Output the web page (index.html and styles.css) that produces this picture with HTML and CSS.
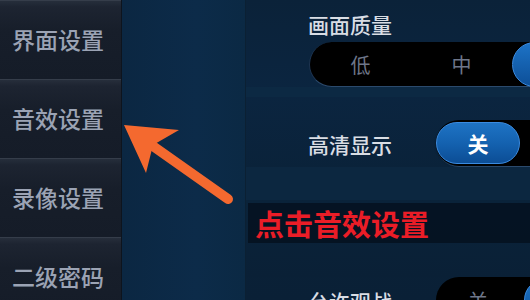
FILE: index.html
```html
<!DOCTYPE html>
<html lang="zh">
<head>
<meta charset="utf-8">
<link rel="stylesheet" href="styles.css">
</head>
<body>
<div class="screen">
  <nav class="sidebar">
    <div class="nav-item">界面设置</div>
    <div class="nav-item">音效设置</div>
    <div class="nav-item">录像设置</div>
    <div class="nav-item">二级密码</div>
  </nav>
  <div class="main">
    <div class="strip"></div>
    <div class="panel">
      <div class="row-quality">
        <div class="label">画面质量</div>
        <div class="segmented">
          <span class="seg">低</span>
          <span class="seg">中</span>
          <span class="seg seg-on"></span>
        </div>
      </div>
      <div class="row-toggle row-hd">
        <div class="label label-fixed">高清显示</div>
        <div class="track">
          <span class="knob">关</span>
        </div>
      </div>
      <div class="band"></div>
      <div class="row-toggle">
        <div class="label label-fixed">允许观战</div>
        <div class="track">
          <span class="off-text">关</span>
          <span class="knob knob-right"></span>
        </div>
      </div>
    </div>
  </div>
  <div class="callout">点击音效设置</div>
  <svg class="arrow" width="530" height="300" viewBox="0 0 530 300">
    <line x1="150" y1="144" x2="228" y2="199" stroke="#f4692f" stroke-width="10" stroke-linecap="round"/>
    <polygon points="124,125 179,130 153,145 146,173" fill="#f4692f"/>
  </svg>
</div>
</body>
</html>
```

FILE: styles.css
```css
* { box-sizing: border-box; }
html, body { margin: 0; padding: 0; }
body {
  width: 530px;
  height: 300px;
  overflow: hidden;
  background: #0a2238;
  font-family: "Noto Sans CJK SC", "Noto Sans", sans-serif;
}
.screen {
  position: relative;
  display: flex;
  width: 530px;
  height: 300px;
  overflow: hidden;
}
.sidebar {
  width: 122px;
  flex: none;
  display: flex;
  flex-direction: column;
  background: #151c28;
  border-right: 1px solid #0e141d;
}
.nav-item {
  height: 79px;
  flex: none;
  display: flex;
  align-items: center;
  padding-left: 12px;
  padding-bottom: 2px;
  font-size: 23px;
  font-weight: 500;
  color: #9ba3b4;
  background: linear-gradient(#262e3b 0px, #1d2431 6px, #171e2a 30px, #151c28 100%);
  border-top: 1px solid #353d4a;
}
.main {
  flex: 1;
  display: flex;
  min-width: 0;
}
.strip {
  width: 123px;
  flex: none;
  background: linear-gradient(90deg, #0b2742 0%, #0c2b49 60%, #0b2944 100%);
}
.panel {
  flex: 1;
  min-width: 0;
  overflow: hidden;
  padding-left: 62px;
  padding-top: 12px;
  background: linear-gradient(#0b2239 0%, #0b2540 30%, #0a2239 60%, #0a2036 100%);
  border-left: 1px solid #0b2033;
}
.label {
  font-size: 21px;
  line-height: 24px;
  color: #d9dde4;
  font-weight: 500;
}
.label-fixed {
  width: 128px;
  flex: none;
}
.row-quality {
  padding-bottom: 10px;
  margin-left: -62px;
  padding-left: 62px;
  background: linear-gradient(transparent 88%, #0c2943 88%);
}
.segmented {
  margin-top: 6px;
  margin-left: 1px;
  width: 320px;
  height: 45px;
  display: flex;
  align-items: center;
  background: #000;
  border-radius: 23px 0 0 23px;
  border-bottom: 1px solid #2b4a6c;
  border-left: 1px solid #1e3552;
}
.seg {
  width: 101px;
  flex: none;
  text-align: center;
  font-size: 20px;
  color: #6e7689;
}
.seg-on {
  height: 45px;
  border-radius: 23px;
  background: linear-gradient(#1d73c6, #0d4f98);
  border: 1px solid #3b8be0;
}
.row-toggle {
  display: flex;
  align-items: center;
}
.row-hd {
  margin-top: 23px;
}
.track {
  width: 120px;
  height: 47px;
  flex: none;
  display: flex;
  align-items: center;
  background: #000;
  border-radius: 23px 0 0 23px;
  border-bottom: 1px solid #2b4a6c;
}
.knob {
  width: 84px;
  height: 42px;
  flex: none;
  display: flex;
  align-items: center;
  justify-content: center;
  border-radius: 21px;
  background: linear-gradient(#1e73c4 0%, #1462b0 50%, #0c4d95 100%);
  border: 1px solid #3b8be0;
  box-shadow: 0 1px 2px rgba(0,0,0,0.6);
  color: #fff;
  font-size: 21px;
  font-weight: 700;
}
.off-text {
  width: 84px;
  flex: none;
  text-align: center;
  font-size: 21px;
  color: #6e7689;
}
.knob-right {
  margin-left: 4px;
}
.band {
  height: 110px;
  margin-left: -62px;
  background: linear-gradient(#0c2740 0%, #0c2740 30%, #0a233a 30%, #0a2036 100%);
}
.callout {
  position: absolute;
  left: 248px;
  top: 203px;
  width: 282px;
  height: 40px;
  padding-left: 7px;
  background: rgba(4, 14, 26, 0.72);
  color: #ea1d27;
  font-size: 29px;
  font-weight: 700;
  line-height: 40px;
  white-space: nowrap;
}
.arrow {
  position: absolute;
  left: 0;
  top: 0;
}
```
